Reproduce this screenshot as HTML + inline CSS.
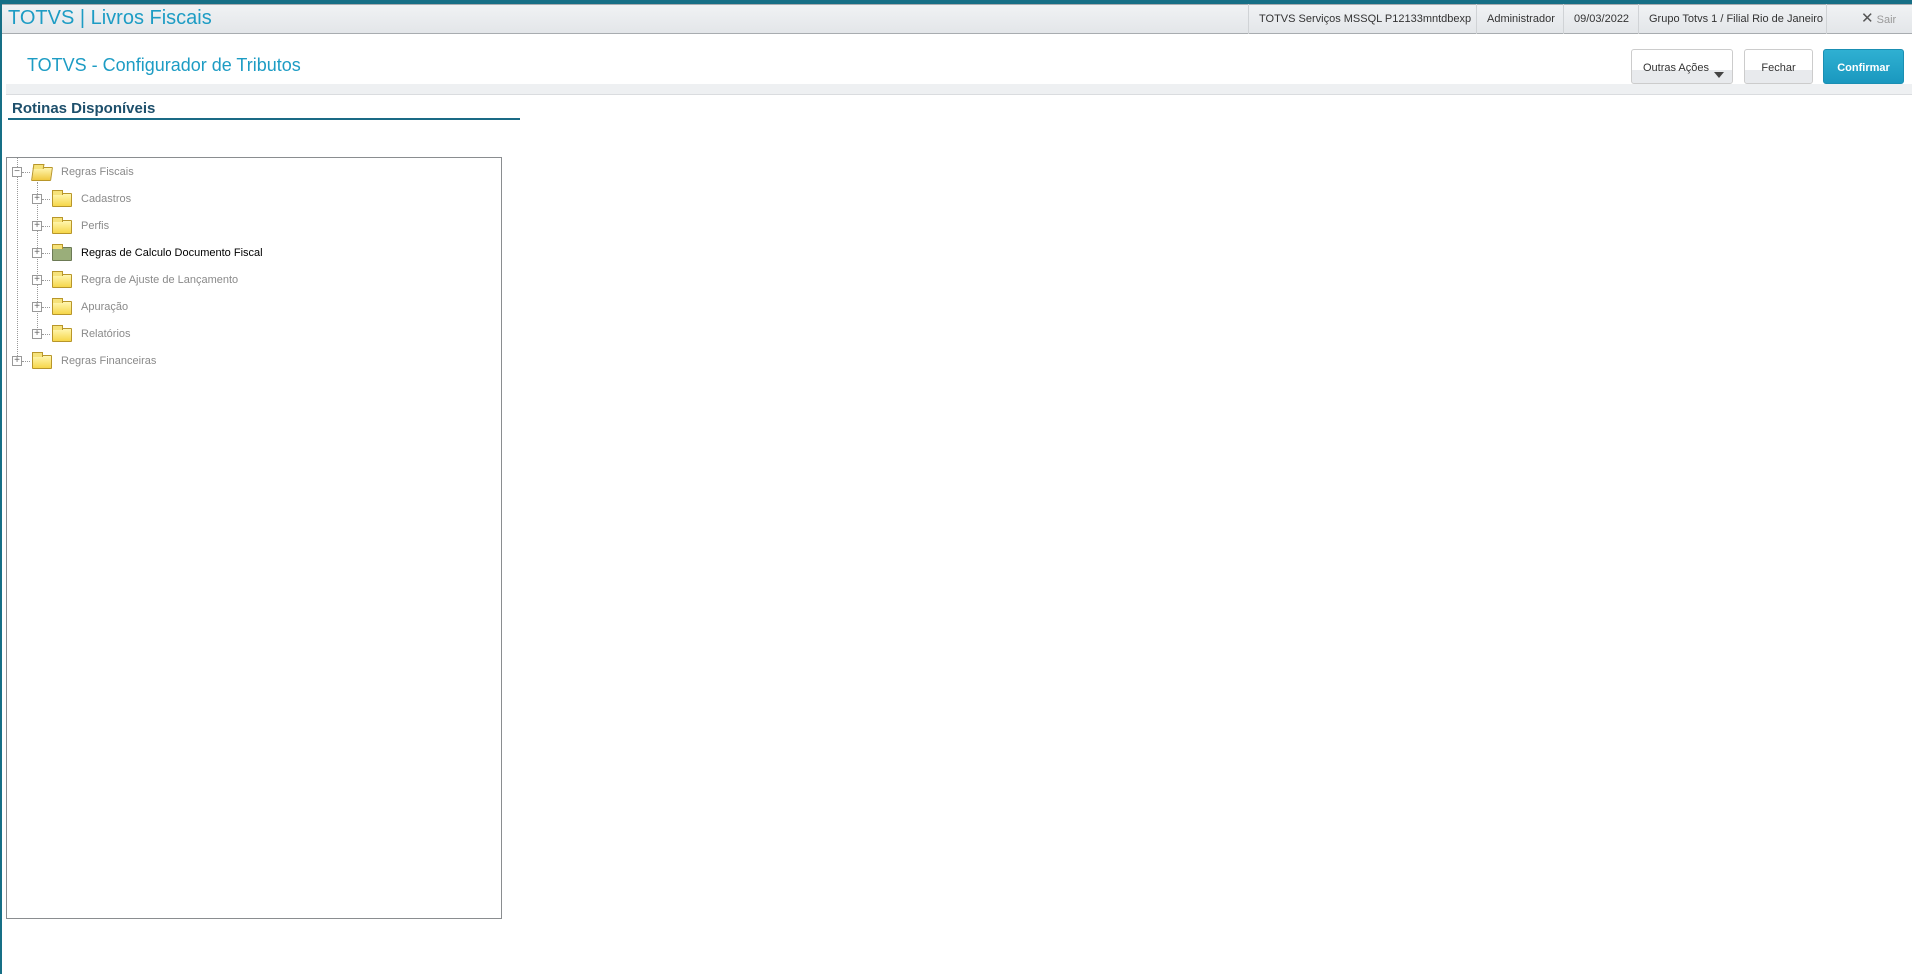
<!DOCTYPE html>
<html><head><meta charset="utf-8"><style>
*{margin:0;padding:0;box-sizing:border-box}
body{width:1912px;height:974px;background:#fff;font-family:"Liberation Sans",sans-serif;position:relative;overflow:hidden}
.abs{position:absolute;white-space:nowrap}
#top{left:0;top:0;width:1912px;height:4px;background:#166f86}
#lb{left:0;top:0;width:2px;height:974px;background:#166f86}
#hdr{left:2px;top:4px;width:1910px;height:30px;background:linear-gradient(#f0f2f4,#e3e6e9);border-top:1px solid #a8acb0;border-bottom:1px solid #a8acb0}
#ttl{left:8px;top:7px;font-size:20px;color:#1d9cc4}
.hi{top:4px;height:30px;line-height:30px;font-size:11px;color:#333;border-left:1px solid #d0d3d6;padding:0 10px}
#t2{left:27px;top:55px;font-size:18px;color:#1d9cc4}
.btn{top:49px;height:35px;border:1px solid #ccc;border-radius:3px;background:linear-gradient(#fff 0 60%,#e8eaed 60%);font-size:11px;color:#333;text-align:center;line-height:36px}
#band{left:6px;top:84px;width:1906px;height:11px;background:#eef0f2;border-bottom:1px solid #dadcdf}
#rot{left:12px;top:100px;font-size:15px;font-weight:bold;color:#1d4f6b}
#ul{left:8px;top:118px;width:512px;height:2px;background:#1a6a85}
#box{left:6px;top:157px;width:496px;height:762px;border:1px solid #8a8d90}
.row{position:absolute;height:20px;font-size:11px;color:#8a8a8a;line-height:20px;white-space:nowrap}
.exp{position:absolute;width:10px;height:10px;border:1px solid #999;background:#fff;font-size:10px;line-height:8px;text-align:center;color:#666}
.fold{position:absolute;width:20px;height:14px;background:linear-gradient(#fff6b0,#f6d64a);border:1px solid #b8962a;border-radius:1px}
.fold:before{content:"";position:absolute;left:-1px;top:-4px;width:9px;height:4px;background:#f6e27a;border:1px solid #b8962a;border-bottom:none}
.dot{position:absolute;border-top:1px dotted #999;width:8px}
.vd{position:absolute;border-left:1px dotted #999}
</style></head><body>
<div id="top" class="abs"></div>
<div id="hdr" class="abs"></div>
<div id="lb" class="abs"></div>
<div id="ttl" class="abs">TOTVS | Livros Fiscais</div>
<div class="abs hi" style="left:1248px;width:228px;text-align:center">TOTVS Serviços MSSQL P12133mntdbexp</div>
<div class="abs hi" style="left:1476px;width:87px;text-align:center">Administrador</div>
<div class="abs hi" style="left:1563px;width:75px;text-align:center">09/03/2022</div>
<div class="abs hi" style="left:1638px;width:188px;text-align:center">Grupo Totvs 1 / Filial Rio de Janeiro</div>
<div class="abs hi" style="left:1826px;width:86px"></div>
<div class="abs" style="left:1861px;top:10px;font-size:11px;color:#999;line-height:18px"><span style="color:#555;font-size:15px">✕</span> Sair</div>
<div id="t2" class="abs">TOTVS - Configurador de Tributos</div>
<div class="abs btn" style="left:1631px;width:102px;padding-right:12px">Outras Ações<span style="position:absolute;right:8px;top:22px;border:5px solid transparent;border-top:6px solid #444"></span></div>
<div class="abs btn" style="left:1744px;width:69px">Fechar</div>
<div class="abs btn" style="left:1823px;width:81px;background:linear-gradient(#2fb0d2,#1a98bf);border-color:#1a8fb3;color:#fff;font-weight:bold">Confirmar</div>
<div id="band" class="abs"></div>
<div id="rot" class="abs">Rotinas Disponíveis</div>
<div id="ul" class="abs"></div>
<div id="box" class="abs"></div>
<div class="vd" style="left:17px;top:158px;height:9px"></div>
<div class="vd" style="left:17px;top:177px;height:179px"></div>
<div class="vd" style="left:37px;top:182px;height:152px"></div>

<div class="exp abs" style="left:12px;top:167px">−</div><div class="dot" style="left:22px;top:172px"></div>
<div class="fold" style="left:32px;top:167px;background:linear-gradient(#fff6b0,#f0c840);transform:skewX(-8deg)"></div>
<div class="row" style="left:61px;top:162px">Regras Fiscais</div>

<div class="exp abs" style="left:32px;top:194px">+</div><div class="dot" style="left:42px;top:199px"></div>
<div class="fold" style="left:52px;top:193px"></div><div class="row" style="left:81px;top:189px">Cadastros</div>

<div class="exp abs" style="left:32px;top:221px">+</div><div class="dot" style="left:42px;top:226px"></div>
<div class="fold" style="left:52px;top:220px"></div><div class="row" style="left:81px;top:216px">Perfis</div>

<div class="exp abs" style="left:32px;top:248px">+</div><div class="dot" style="left:42px;top:253px"></div>
<div class="fold" style="left:52px;top:247px;background:#9aae7a;border-color:#6c7a55"></div><div class="row" style="left:81px;top:243px;color:#000">Regras de Calculo Documento Fiscal</div>

<div class="exp abs" style="left:32px;top:275px">+</div><div class="dot" style="left:42px;top:280px"></div>
<div class="fold" style="left:52px;top:274px"></div><div class="row" style="left:81px;top:270px">Regra de Ajuste de Lançamento</div>

<div class="exp abs" style="left:32px;top:302px">+</div><div class="dot" style="left:42px;top:307px"></div>
<div class="fold" style="left:52px;top:301px"></div><div class="row" style="left:81px;top:297px">Apuração</div>

<div class="exp abs" style="left:32px;top:329px">+</div><div class="dot" style="left:42px;top:334px"></div>
<div class="fold" style="left:52px;top:328px"></div><div class="row" style="left:81px;top:324px">Relatórios</div>

<div class="exp abs" style="left:12px;top:356px">+</div><div class="dot" style="left:22px;top:361px"></div>
<div class="fold" style="left:32px;top:355px"></div><div class="row" style="left:61px;top:351px">Regras Financeiras</div>
</body></html>
